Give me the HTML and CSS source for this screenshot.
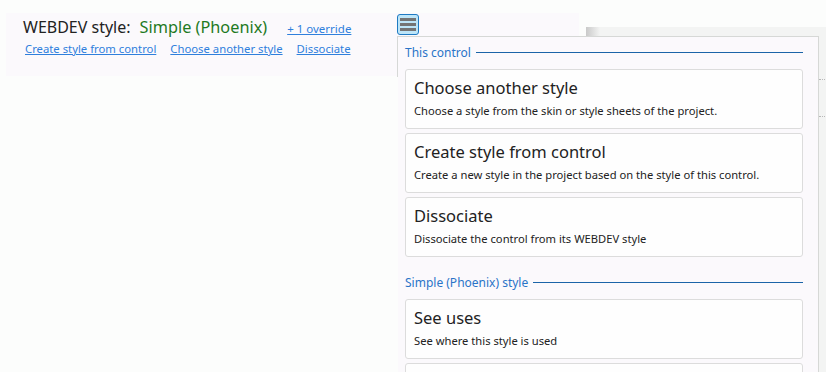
FILE: index.html
```html
<!DOCTYPE html>
<html>
<head>
    <title>WEBDEV style</title>
    <link rel="stylesheet" href="styles.css">
</head>
<body>
    <div id="backdrop">
        <span class="dots d1"></span>
        <span class="dots d2"></span>
    </div>

    <div id="style-bar">
        <div class="style-row">
            <span class="style-label">WEBDEV style:</span>
            <span class="style-name">Simple (Phoenix)</span>
            <a class="override" href="#">+ 1 override</a>
        </div>
        <div class="link-row">
            <a href="#">Create style from control</a>
            <a href="#">Choose another style</a>
            <a href="#">Dissociate</a>
        </div>
    </div>

    <button id="menu-button" title="Menu">
        <span></span><span></span><span></span>
    </button>

    <div id="style-menu">
        <div class="section">
            <div class="section-title">This control</div>
            <div class="card">
                <div class="card-title">Choose another style</div>
                <div class="card-desc">Choose a style from the skin or style sheets of the project.</div>
            </div>
            <div class="card">
                <div class="card-title">Create style from control</div>
                <div class="card-desc">Create a new style in the project based on the style of this control.</div>
            </div>
            <div class="card">
                <div class="card-title">Dissociate</div>
                <div class="card-desc">Dissociate the control from its WEBDEV style</div>
            </div>
        </div>
        <div class="section">
            <div class="section-title">Simple (Phoenix) style</div>
            <div class="card">
                <div class="card-title">See uses</div>
                <div class="card-desc">See where this style is used</div>
            </div>
            <!-- carte suivante, coupée par le bas de la fenêtre -->
            <div class="card"></div>
        </div>
    </div>
</body>
</html>
```

FILE: styles.css
```css
body {
    margin: 0;
    overflow: hidden;
    background-color: #fcfdfc;
    font-family: "Noto Sans", "Open Sans", sans-serif;
    color: #222;
}
a {
    color: #2f7fdc;
    text-decoration: underline;
}

/* fenetre grise derriere le menu */
#backdrop {
    position: absolute;
    left: 586px;
    top: 27px;
    right: 0;
    bottom: 0;
    background: linear-gradient(to right, #c9c9c9, #f3f4f3 14px);
}
.dots {
    position: absolute;
    right: 1px;
    width: 6px;
    border-top: 1px dotted #b8b8b8;
}
.d1 { top: 52px; }
.d2 { top: 89px; }

/* barre du haut */
#style-bar {
    margin: 13px 0 0 6px;
    width: 573px;
    height: 63px;
    box-sizing: border-box;
    padding: 3px 0 0 17px;
    background: #fbf9fc;
}
.style-row {
    display: flex;
    align-items: baseline;
    height: 24px;
}
.style-label {
    font-size: 16px;
}
.style-name {
    font-size: 16.3px;
    color: #1f7a1f;
    margin-left: 9px;
}
.override {
    font-size: 11.5px;
    margin-left: 20px;
}
.link-row {
    display: flex;
    gap: 14px;
    margin: 1px 0 0 2px;
    font-size: 11.3px;
}

/* bouton hamburger */
#menu-button {
    position: absolute;
    left: 397px;
    top: 14px;
    width: 22px;
    height: 21px;
    padding: 0;
    box-sizing: border-box;
    border: 1px solid #1f7ac2;
    border-radius: 3px;
    background: #bde5f8;
    display: flex;
    flex-direction: column;
    align-items: center;
    justify-content: center;
    gap: 2px;
    z-index: 2;
}
#menu-button span {
    width: 16px;
    height: 3px;
    background: #747474;
}

/* menu deroulant */
#style-menu {
    position: absolute;
    left: 398px;
    top: 36px;
    width: 421px;
    height: 360px;
    box-sizing: border-box;
    padding: 8px 15px 0 7px;
    background: #fbf9fc;
    border-top: 1px solid #d6d8d6;
    border-right: 1px solid #d6d8d6;
}
#style-menu::before {
    content: "";
    position: absolute;
    left: -1px;
    top: -1px;
    height: 41px;
    border-left: 1px solid #d6d8d6;
}
.section + .section {
    margin-top: 18px;
}
.section-title {
    display: flex;
    align-items: center;
    gap: 5px;
    height: 15px;
    margin-bottom: 9px;
    font-size: 12px;
    color: #2a74c8;
}
.section-title::after {
    content: "";
    flex: 1;
    border-top: 1px solid #1b64a8;
}
.card {
    height: 60px;
    box-sizing: border-box;
    margin-bottom: 4px;
    padding: 7px 8px 0 8px;
    background: #fefefe;
    border: 1px solid #dcdcdc;
    border-radius: 3px;
}
.card-title {
    font-size: 16.5px;
    line-height: 22px;
}
.card-desc {
    margin-top: 2px;
    font-size: 11.2px;
    line-height: 20px;
}
```
